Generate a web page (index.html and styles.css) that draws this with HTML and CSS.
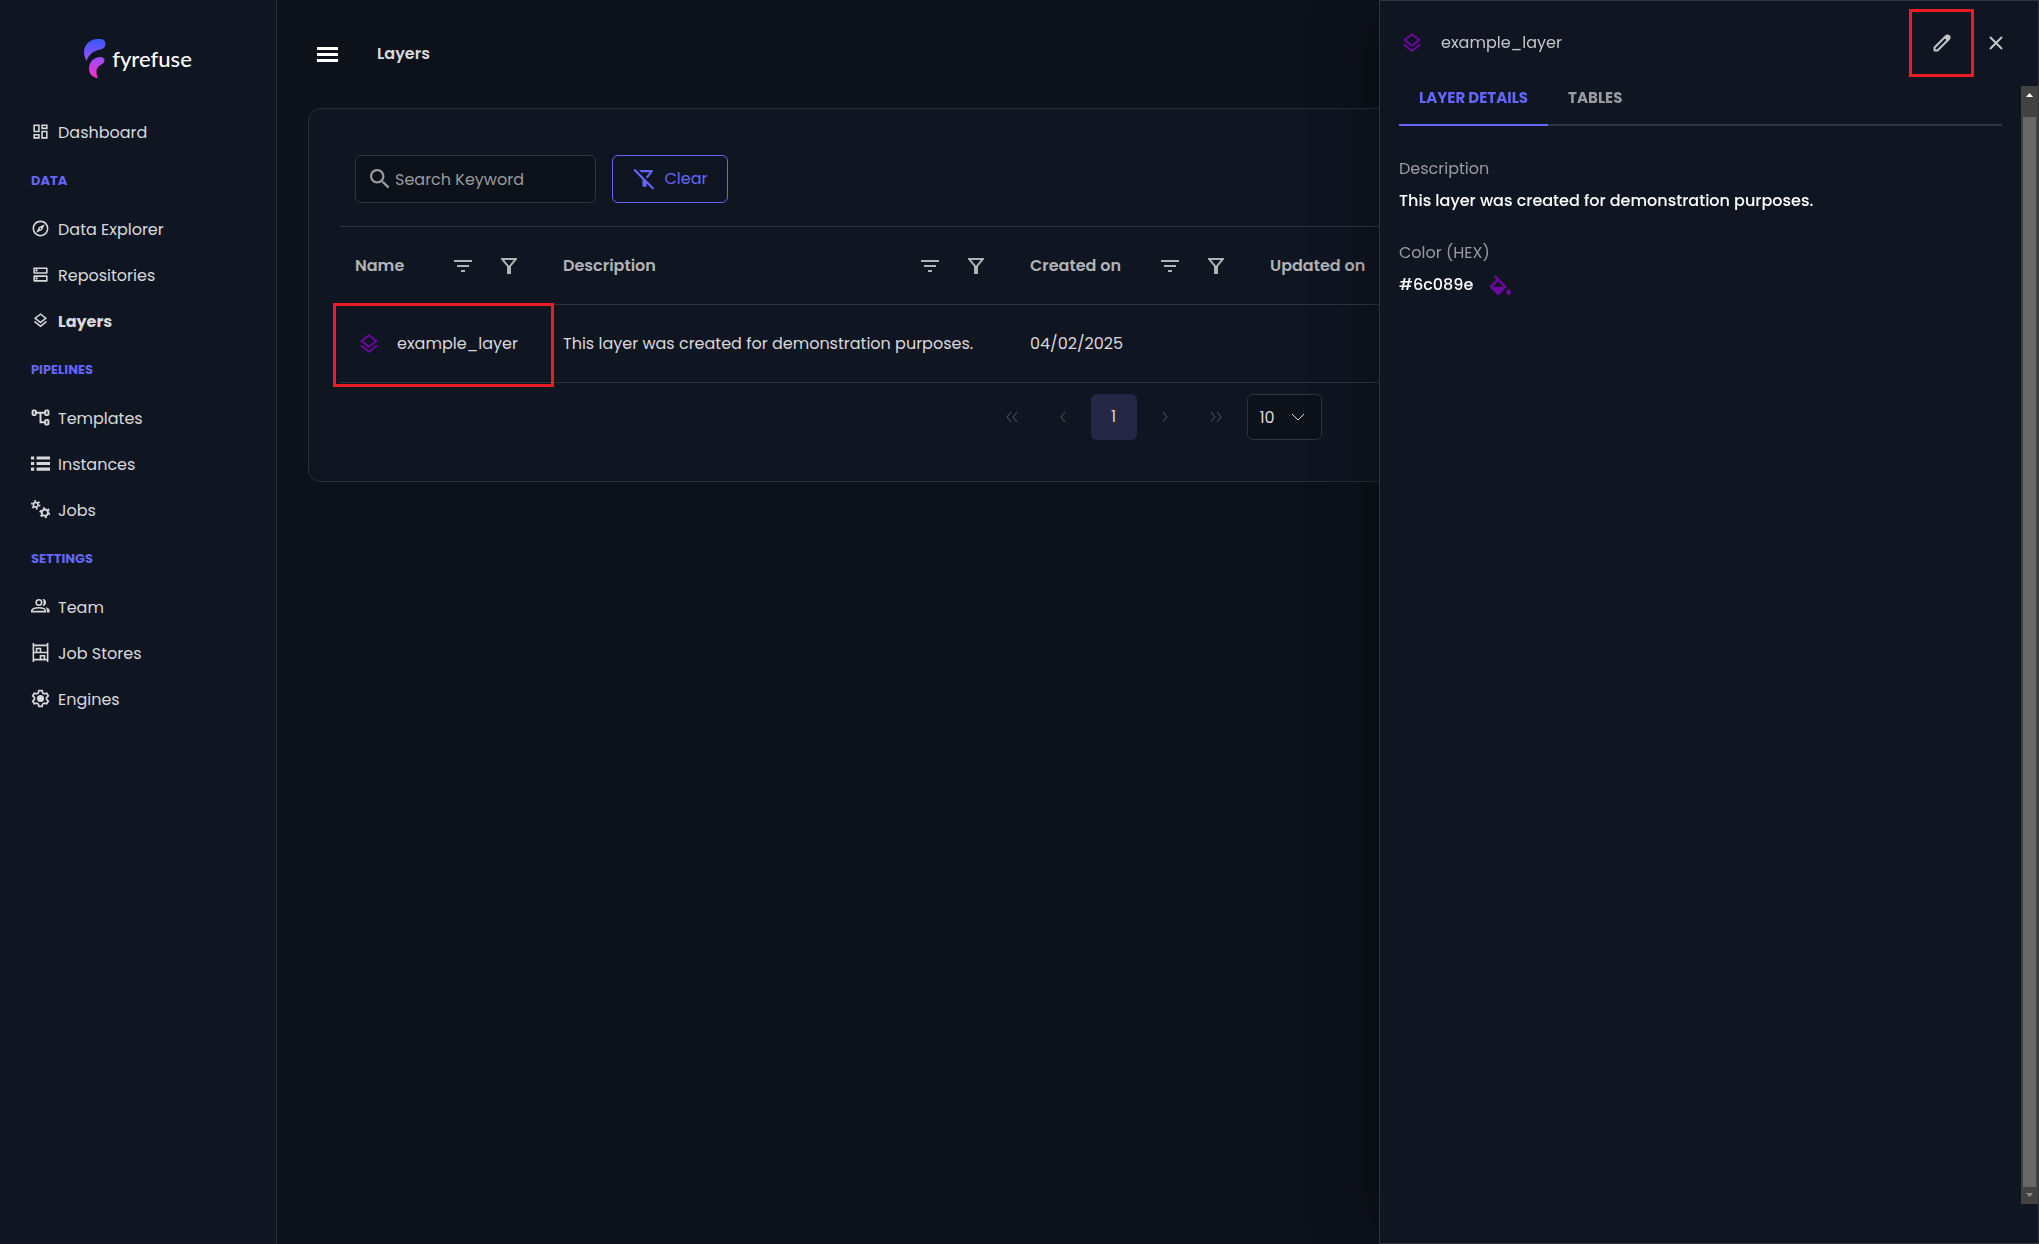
FILE: index.html
```html
<!DOCTYPE html>
<html lang="en">
<head>
  <meta charset="utf-8">
  <title>Layers - fyrefuse</title>
  <link rel="stylesheet" href="styles.css">
</head>
<body>
  <!-- shared icons -->
  <svg class="sprite" aria-hidden="true">
    <symbol id="i-layers" viewBox="0 0 24 24"><path d="M11.99 18.54l-7.37-5.73L3 14.07l9 7 9-7-1.63-1.27-7.38 5.74zM12 16l7.36-5.73L21 9l-9-7-9 7 1.63 1.27L12 16zm0-11.47L17.74 9 12 13.47 6.26 9 12 4.53z"/></symbol>
    <symbol id="i-sort" viewBox="0 0 18 14"><path d="M0 1h18v2H0zM3 6h12v2H3zM7 11h4v2H7z"/></symbol>
    <symbol id="i-filter" viewBox="0 0 16 16"><path d="M1 1h14L9 8v7.500H7V8z" fill="none" stroke="currentColor" stroke-width="2"/></symbol>
  </svg>

  <div class="layout">
    <aside class="sidebar">
      <a class="logo" href="#">
        <svg width="22" height="39" viewBox="0 0 22 39">
          <defs>
            <linearGradient id="flame" x1="0" y1="0" x2="0" y2="39" gradientUnits="userSpaceOnUse">
              <stop offset="0" stop-color="#3558ff"/>
              <stop offset=".5" stop-color="#9a4df5"/>
              <stop offset="1" stop-color="#ff2bd0"/>
            </linearGradient>
          </defs>
          <path fill="url(#flame)" d="M2.500 22C1 19 0 16.500 0 13.500C0 5.500 6 0 13.500 0H16.500C19.500 0 21.500 2.300 21.500 5C21.500 8.500 19 10 15.500 10.800C9.500 12.300 5 15 2.500 22Z"/>
          <path fill="url(#flame)" d="M14 39C8.500 38.500 5 35 5 29.500C5 23 10 18 16.500 18C19 18 20.500 19.500 20.500 21.500C20.500 24 18.500 25 16.500 26C12 28.500 11.500 33.500 14 39Z"/>
        </svg>
        <span>fyrefuse</span>
      </a>

      <nav class="menu">
        <a href="#"><svg viewBox="0 0 24 24"><path d="M19 5v2h-4V5h4M9 5v6H5V5h4m10 8v6h-4v-6h4M9 17v2H5v-2h4M21 3h-8v6h8V3zM11 3H3v10h8V3zm10 8h-8v10h8V11zm-10 4H3v6h8v-6z"/></svg>Dashboard</a>

        <h2>DATA</h2>
        <a href="#"><svg viewBox="0 0 24 24"><path d="M12 2C6.480 2 2 6.480 2 12s4.480 10 10 10 10-4.480 10-10S17.520 2 12 2zm0 18c-4.410 0-8-3.590-8-8s3.590-8 8-8 8 3.590 8 8-3.590 8-8 8zm-5.500-2.500l7.510-3.490L17.500 6.500 9.990 9.990 6.500 17.500zm5.500-6.600c.61 0 1.100.49 1.100 1.100s-.49 1.100-1.100 1.100-1.100-.49-1.100-1.100.49-1.100 1.100-1.100z"/></svg>Data Explorer</a>
        <a href="#"><svg viewBox="0 0 24 24"><path d="M19 15v4H5v-4h14m1-2H4c-.55 0-1 .45-1 1v6c0 .55.45 1 1 1h16c.55 0 1-.45 1-1v-6c0-.55-.45-1-1-1zM7 18.500c-.82 0-1.500-.67-1.500-1.500s.68-1.500 1.500-1.500 1.500.67 1.500 1.500-.67 1.500-1.500 1.500zM19 5v4H5V5h14m1-2H4c-.55 0-1 .45-1 1v6c0 .55.45 1 1 1h16c.55 0 1-.45 1-1V4c0-.55-.45-1-1-1zM7 8.500c-.82 0-1.500-.67-1.500-1.500S6.180 5.500 7 5.500s1.500.68 1.500 1.500S7.830 8.500 7 8.500z"/></svg>Repositories</a>
        <a class="active" href="#"><svg viewBox="-1 -1 26 26"><use href="#i-layers" width="24" height="24"/></svg>Layers</a>

        <h2>PIPELINES</h2>
        <a href="#"><svg viewBox="0 0 24 24"><g fill="none" stroke="currentColor" stroke-width="2.500"><rect x="2" y="3" width="4" height="6" rx="1"/><rect x="18" y="3" width="4" height="6" rx="1"/><rect x="18" y="15" width="4" height="6" rx="1"/><path d="M6 6h12M12 6v12h6"/></g></svg>Templates</a>
        <a href="#"><svg viewBox="0 0 24 24"><path d="M0 3h4v4H0zM7 3h17v4H7zM0 10h4v4H0zM7 10h17v4H7zM0 17h4v4H0zM7 17h17v4H7z"/></svg>Instances</a>
        <a href="#"><svg viewBox="0 0 24 24"><g fill="none" stroke="currentColor"><circle cx="6" cy="6" r="3" stroke-width="2"/><circle cx="6" cy="6" r="5" stroke-width="2" stroke-dasharray="2.240 3"/><circle cx="17.500" cy="16" r="4" stroke-width="2.500"/><circle cx="17.500" cy="16" r="6" stroke-width="2" stroke-dasharray="2.800 3.480"/></g></svg>Jobs</a>

        <h2>SETTINGS</h2>
        <a href="#"><svg viewBox="0 0 24 24"><g fill="none" stroke="currentColor" stroke-width="2"><circle cx="10" cy="7" r="3.500"/><path d="M1 18.500v-1.500c1-2.500 5-3.500 9-3.500s8 1.200 8 3.500v1.500z"/></g><path d="M14.500 2.500c6-.5 6 9.500 0 9 2-3 2-6 0-9zM18.500 13c3 .5 5 2 5 4v2.500h-3.500V17c0-1.500-.5-3-1.500-4z"/></svg>Team</a>
        <a href="#"><svg viewBox="0 0 24 24"><g fill="none" stroke="currentColor" stroke-width="2"><path d="M3 0v24M21 0v24M3 3h18M3 12h18M3 21h18"/><path d="M7 12V7h5v5M12 21v-5h5v5"/></g></svg>Job Stores</a>
        <a href="#"><svg viewBox="0 0 24 24"><path d="M10 2h4l.8 3 2 1.200 3-.9 2 3.500L19.600 11v2l2.200 2.200-2 3.500-3-.9-2 1.200-.8 3h-4l-.8-3-2-1.200-3 .9-2-3.500L4.400 13v-2L2.200 8.800l2-3.500 3 .9 2-1.200z" fill="none" stroke="currentColor" stroke-width="2.200"/><circle cx="12" cy="12" r="4.500"/></svg>Engines</a>
      </nav>
    </aside>

    <main class="main">
      <header class="topbar">
        <button class="burger" aria-label="Toggle menu"><svg width="21" height="15" viewBox="0 0 21 15"><path d="M0 0h21v3H0zM0 6h21v3H0zM0 12h21v3H0z"/></svg></button>
        <h1>Layers</h1>
      </header>

      <section class="card">
        <div class="toolbar">
          <label class="search">
            <svg width="20" height="20" viewBox="3 3 18 18"><path d="M15.500 14h-.79l-.28-.27C15.410 12.590 16 11.110 16 9.500 16 5.910 13.090 3 9.500 3S3 5.910 3 9.500 5.910 16 9.500 16c1.610 0 3.090-.59 4.230-1.570l.27.28v.79l5 4.990L20.490 19l-4.990-5zm-6 0C7.010 14 5 11.990 5 9.500S7.010 5 9.500 5 14 7.010 14 9.500 11.990 14 9.500 14z"/></svg>
            <input type="text" placeholder="Search Keyword" aria-label="Search Keyword">
          </label>
          <button class="clear">
            <svg width="22" height="22" viewBox="1 2 21 21"><path d="M16.950 6l-3.570 4.550 1.430 1.430c1.030-1.310 4.980-6.370 4.980-6.370C20.300 4.950 19.830 4 19 4H6.830l2 2h8.120zM2.810 2.810L1.390 4.220 10 13v6c0 .55.45 1 1 1h2c.55 0 1-.45 1-1v-2.170l5.780 5.780 1.410-1.410L2.810 2.810z"/></svg>
            Clear
          </button>
        </div>

        <table class="grid">
          <colgroup>
            <col class="col-name">
            <col>
            <col class="col-date">
            <col class="col-date">
            <col class="col-rest">
          </colgroup>
          <thead>
            <tr>
              <th><div class="head">Name <span class="tools"><button aria-label="Sort by name"><svg width="18" height="14"><use href="#i-sort"/></svg></button><button aria-label="Filter name"><svg width="16" height="16"><use href="#i-filter"/></svg></button></span></div></th>
              <th><div class="head">Description <span class="tools"><button aria-label="Sort by description"><svg width="18" height="14"><use href="#i-sort"/></svg></button><button aria-label="Filter description"><svg width="16" height="16"><use href="#i-filter"/></svg></button></span></div></th>
              <th><div class="head">Created on <span class="tools"><button aria-label="Sort by creation date"><svg width="18" height="14"><use href="#i-sort"/></svg></button><button aria-label="Filter creation date"><svg width="16" height="16"><use href="#i-filter"/></svg></button></span></div></th>
              <th><div class="head">Updated on</div></th>
              <th></th>
            </tr>
          </thead>
          <tbody>
            <tr>
              <td class="marked"><div class="layer"><svg width="24" height="24"><use href="#i-layers"/></svg>example_layer</div></td>
              <td>This layer was created for demonstration purposes.</td>
              <td>04/02/2025</td>
              <td></td>
              <td></td>
            </tr>
          </tbody>
        </table>

        <div class="paginator">
          <button disabled aria-label="First page"><svg width="14" height="12" viewBox="0 0 14 12"><path d="M6 1L2 6l4 5M12 1L8 6l4 5"/></svg></button>
          <button disabled aria-label="Previous page"><svg width="12" height="12" viewBox="0 0 12 12"><path d="M8 1L4 6l4 5"/></svg></button>
          <button class="current">1</button>
          <button disabled aria-label="Next page"><svg width="12" height="12" viewBox="0 0 12 12"><path d="M4 1l4 5-4 5"/></svg></button>
          <button disabled aria-label="Last page"><svg width="14" height="12" viewBox="0 0 14 12"><path d="M2 1l4 5-4 5M8 1l4 5-4 5"/></svg></button>
          <div class="rows">
            <select aria-label="Rows per page"><option>10</option><option>25</option><option>50</option></select>
            <svg width="14" height="8" viewBox="0 0 14 8"><path d="M1 1l6 6 6-6"/></svg>
          </div>
        </div>
      </section>
    </main>
  </div>

  <!-- layer details -->
  <aside class="drawer">
    <header class="drawer-head">
      <svg class="tint" width="24" height="24"><use href="#i-layers"/></svg>
      <span class="drawer-title">example_layer</span>
      <button class="edit" aria-label="Edit layer"><svg width="18" height="18" viewBox="0 0 18 18"><path d="M1.500 16.500v-3L13 2a2 2 0 0 1 3 3L4.500 16.500z" stroke-width="2" stroke-linejoin="round"/><path class="solid" d="M11.500 3.500l3 3 2.500-2.500-3-3z"/></svg></button>
      <button class="close" aria-label="Close"><svg width="14" height="14" viewBox="0 0 14 14"><path d="M1 1l12 12M13 1L1 13" stroke-width="2"/></svg></button>
    </header>
    <div class="drawer-body">
      <div class="drawer-content">
        <div class="tabs">
          <button class="selected">LAYER DETAILS</button>
          <button>TABLES</button>
        </div>
        <dl class="details">
          <dt>Description</dt>
          <dd>This layer was created for demonstration purposes.</dd>
          <dt>Color (HEX)</dt>
          <dd>#6c089e <svg class="tint" width="21" height="20" viewBox="3 0 18 17"><path d="M16.560 8.940L7.620 0 6.210 1.410l2.380 2.380-5.150 5.150c-.59.59-.59 1.540 0 2.120l5.500 5.500c.29.29.68.44 1.060.44s.77-.15 1.060-.44l5.500-5.500c.59-.58.59-1.530 0-2.120zM5.210 10L10 5.210 14.790 10H5.210zM19 11.500s-2 2.170-2 3.500c0 1.100.9 2 2 2s2-.9 2-2c0-1.330-2-3.500-2-3.500z"/></svg></dd>
        </dl>
      </div>
      <div class="scrollbar">
        <svg width="7" height="4" viewBox="0 0 7 4"><path d="M0 4h7L3.500 0z"/></svg>
        <div class="thumb"></div>
        <svg class="dim" width="7" height="4" viewBox="0 0 7 4"><path d="M0 0h7L3.500 4z"/></svg>
      </div>
    </div>
  </aside>
</body>
</html>
```
FILE: styles.css
```css
* {
  box-sizing: border-box;
}
body {
  margin: 0;
  background-color: #0d111a;
  color: #d9d9dc;
  font-family: Poppins, Inter, sans-serif;
  font-size: 16px;
  line-height: 24px;
  overflow: hidden;
}
button, input, select {
  font: inherit;
  color: inherit;
}
button {
  display: flex;
  align-items: center;
  justify-content: center;
  padding: 0;
  border: 0;
  background: none;
}
svg {
  fill: currentColor;
  flex-shrink: 0;
}
.sprite {
  position: absolute;
  width: 0;
  height: 0;
}
.layout {
  display: flex;
  min-height: 100vh;
}

/* sidebar */
.sidebar {
  width: 277px;
  flex-shrink: 0;
  background-color: #0f1521;
  border-right: 1px solid #292d38;
}
.logo {
  display: flex;
  align-items: center;
  justify-content: center;
  gap: 6px;
  height: 110px;
  padding-top: 7px;
  color: #fff;
  font-family: Lato, sans-serif;
  font-size: 22px;
  font-weight: 500;
  text-decoration: none;
}
.menu a {
  display: flex;
  align-items: center;
  gap: 8px;
  height: 46px;
  padding-left: 31px;
  color: #d9d9dc;
  text-decoration: none;
}
.menu a.active {
  font-weight: 700;
}
.menu svg {
  width: 19px;
  height: 19px;
  margin-bottom: 3px;
}
.menu h2 {
  margin: 0 0 2px;
  padding-left: 31px;
  color: #6366f8;
  font-size: 13px;
  line-height: 49px;
}

/* content */
.main {
  flex: 1;
  padding-right: 36px;
  padding-left: 31px;
}
.topbar {
  display: flex;
  align-items: center;
  gap: 39px;
  height: 108px;
  padding-left: 9px;
}
.topbar h1 {
  margin: 0;
  font-size: 16px;
  font-weight: 600;
}
.burger {
  color: #fff;
}
.card {
  padding: 31px;
  background-color: #0f1521;
  border: 1px solid #292d38;
  border-radius: 12px;
}
.toolbar {
  display: flex;
  gap: 16px;
  padding: 15px 15px 23px;
}
.search {
  display: flex;
  align-items: center;
  gap: 5px;
  width: 241px;
  height: 48px;
  padding: 0 14px;
  background-color: #0d111a;
  border: 1px solid #30343f;
  border-radius: 6px;
  color: #9a9b9f;
}
.search input {
  width: 100%;
  padding: 2px 0 0;
  border: 0;
  outline: 0;
  background: none;
}
.search input::placeholder {
  color: #9a9b9f;
}
.clear {
  gap: 10px;
  width: 116px;
  border: 1px solid #6366f8;
  border-radius: 6px;
  color: #6366f8;
}

.grid {
  width: 100%;
  table-layout: fixed;
  border-collapse: collapse;
  border-top: 1px solid #30343f;
}
.col-name {
  width: 208px;
}
.col-date {
  width: 240px;
}
.col-rest {
  width: 476px;
}
.grid th, .grid td {
  height: 78px;
  padding: 0 15px;
  border-bottom: 1px solid #30343f;
  text-align: left;
  white-space: nowrap;
}
.grid th {
  color: #b2b3b7;
  font-weight: 600;
}
.head {
  display: flex;
  justify-content: space-between;
}
.tools {
  display: flex;
  gap: 29px;
  padding-right: 16px;
}
.layer {
  display: flex;
  align-items: center;
  gap: 16px;
}
.layer svg, .tint {
  color: #6c089e;
}
.layer svg {
  margin-left: 2px;
}
/* highlighted cell */
.marked {
  position: relative;
}
.marked::after {
  content: "";
  position: absolute;
  top: -2px;
  right: -6px;
  bottom: -5px;
  left: -7px;
  border: 3px solid #ed1c24;
}

.paginator {
  display: flex;
  justify-content: center;
  gap: 5px;
  padding: 11px 11px 10px 10px;
}
.paginator button {
  width: 46px;
  height: 46px;
  border-radius: 6px;
}
.paginator button:disabled {
  color: #555862;
}
.paginator button.current {
  background-color: #252746;
}
.paginator svg {
  fill: none;
  stroke: currentColor;
}
.rows {
  position: relative;
  display: flex;
  align-items: center;
  margin-left: 3px;
}
.rows select {
  width: 75px;
  height: 46px;
  padding: 2px 12px 0;
  appearance: none;
  background-color: #0d111a;
  border: 1px solid #30343f;
  border-radius: 6px;
}
.rows svg {
  position: absolute;
  right: 17px;
  pointer-events: none;
}

/* drawer */
.drawer {
  position: fixed;
  top: 0;
  right: 0;
  bottom: 0;
  display: flex;
  flex-direction: column;
  width: 660px;
  padding-bottom: 39px;
  background-color: #0f1521;
  border: 1px solid #30343f;
  box-shadow: 0 0 60px rgba(0, 0, 0, 0.4);
}
.drawer-head {
  display: flex;
  align-items: center;
  height: 85px;
  padding: 0 35px 2px 20px;
  color: #c4c5c8;
}
.drawer-title {
  flex: 1;
  margin-left: 17px;
}
.edit {
  width: 65px;
  height: 68px;
  border: 3px solid #ed1c24;
}
.edit svg, .close svg {
  fill: none;
  stroke: currentColor;
}
.edit .solid {
  fill: currentColor;
}
.close {
  margin-left: 15px;
}
.drawer-body {
  display: flex;
  flex: 1;
}
.drawer-content {
  flex: 1;
  padding: 0 19px;
}
.tabs {
  display: flex;
  border-bottom: 2px solid #30343f;
}
.tabs button {
  height: 40px;
  margin-bottom: -2px;
  padding: 0 20px 14px;
  border-bottom: 2px solid transparent;
  color: #9a9b9f;
  font-size: 15px;
  font-weight: 700;
}
.tabs .selected {
  border-color: #6366f8;
  color: #6366f8;
}
.details {
  margin: 31px 0 0;
}
.details dt {
  margin-bottom: 8px;
  color: #9a9b9f;
}
.details dd {
  display: flex;
  align-items: center;
  gap: 17px;
  margin: 0 0 28px;
  color: #fff;
  font-weight: 500;
}
.scrollbar {
  display: flex;
  flex-direction: column;
  align-items: center;
  justify-content: space-between;
  width: 17px;
  padding: 7px 0;
  background-color: #424242;
  color: #fff;
}
.thumb {
  flex: 1;
  width: 13px;
  margin: 20px 0 6px;
  background-color: #686868;
}
.scrollbar .dim {
  color: #8a8a8a;
}
```
